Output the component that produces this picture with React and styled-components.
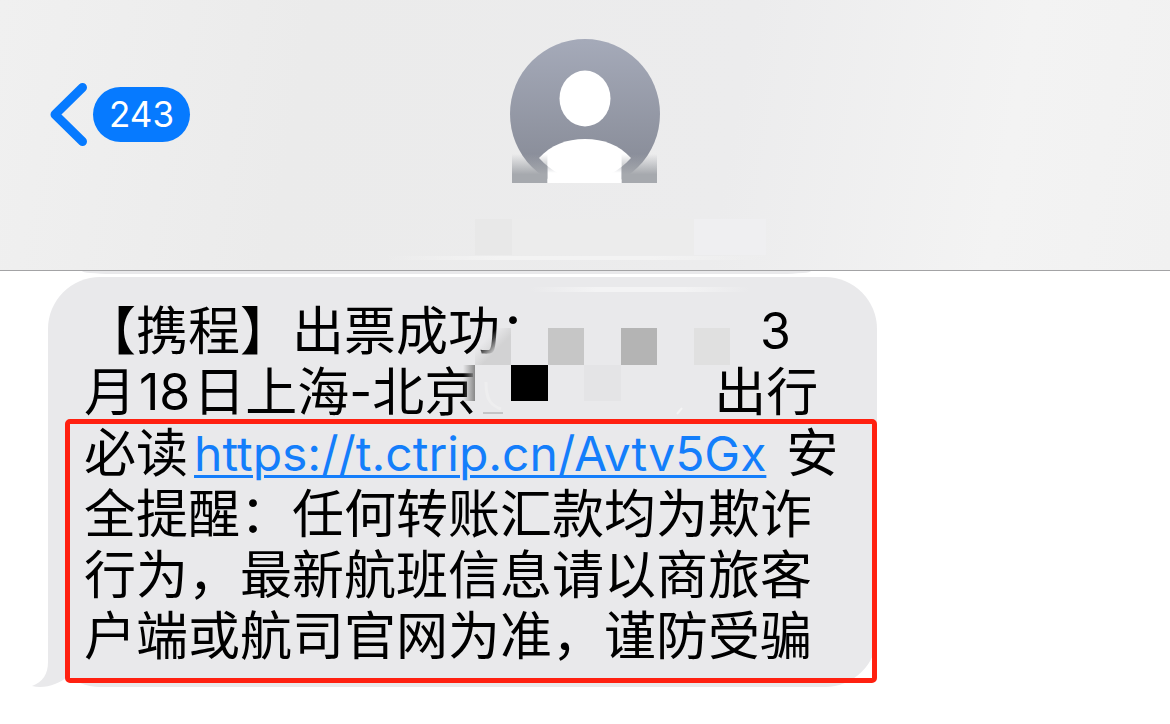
import styled, { createGlobalStyle } from 'styled-components';

const GlobalStyle = createGlobalStyle`
  * {
    box-sizing: border-box;
  }

  body {
    margin: 0;
    background: #fff;
    color: #000;
    font-family: Inter, 'Noto Sans CJK SC', sans-serif;
  }
`;

const Header = styled.header`
  display: grid;
  grid-template-columns: 1fr auto 1fr;
  align-items: start;
  height: 271px;
  padding: 39px 50px 0;
  border-bottom: 1px solid #a3a3a5;
  background: linear-gradient(100deg, #f0f0f0 0%, #ebebeb 26%, #ececed 62%, #f3f3f3 85%, #f1f1f1 100%);
`;

const BackButton = styled.button`
  display: flex;
  align-items: center;
  justify-self: start;
  gap: 5px;
  margin-top: 44px;
  padding: 0;
  border: 0;
  background: none;
  font-family: inherit;
  cursor: pointer;
`;

const Badge = styled.span`
  display: flex;
  align-items: center;
  height: 55px;
  padding: 0 16px;
  border-radius: 28px;
  background: #067aff;
  color: #fff;
  font-size: 35px;
  line-height: 55px;
`;

const Contact = styled.div`
  position: relative;
`;

const NameMosaic = styled.svg`
  position: absolute;
  top: 144px;
  left: 50%;
  width: 420px;
  transform: translateX(-50%);
`;

const Thread = styled.main`
  padding: 0 48px 36px;
`;

const PreviousBubble = styled.div`
  max-width: 829px;
  padding: 0 66px 0 34px;

  &::before {
    content: '';
    display: block;
    height: 3px;
    border-radius: 0 0 30px 30px / 0 0 3px 3px;
    background: #e9e9eb;
  }
`;

const Bubble = styled.article`
  position: relative;
  max-width: 829px;
  margin-top: 3px;
  padding: 24px 36px 20px;
  border-radius: 52px;
  background: #e9e9eb;
  font-size: 52px;
  line-height: 61px;
  white-space: nowrap;
`;

const Tail = styled.svg`
  position: absolute;
  left: -16px;
  bottom: 0;
`;

const Line = styled.div`
  display: flex;
  height: 61px;
`;

const Latin = styled.span`
  font-size: 50px;
`;

const Day = styled(Latin)`
  margin: 0 3px;
`;

const Link = styled.a`
  margin: 0 20px 0 6px;
  color: #147efb;
  font-size: 48px;
  text-decoration: underline;
  text-decoration-thickness: 3px;
  text-underline-offset: 4px;
`;

const Hidden = styled.span`
  flex: 0 0 ${({ $width }) => $width}px;
`;

const Mosaic = styled.svg`
  position: absolute;
  top: 0;
  left: 412px;
`;

const Marked = styled.div`
  position: relative;
`;

const Marker = styled.div`
  position: absolute;
  inset: -4px -36px -16px -19px;
  border: 5px solid #ff2010;
  border-radius: 5px;
  pointer-events: none;
`;

const ChevronLeft = () => (
  <svg width="38" height="63" viewBox="0 0 38 63" aria-hidden="true">
    <path d="M32.5 4.5 5 31.5 32.5 58.5" fill="none" stroke="#067aff" strokeWidth="9" strokeLinecap="round" strokeLinejoin="round" />
  </svg>
);

const Avatar = () => (
  <svg width="150" height="144" viewBox="0 0 150 144" role="img" aria-label="Contact" display="block">
    <defs>
      <linearGradient id="disc" x1="0" y1="0" x2="0" y2="1">
        <stop offset="0" stopColor="#a5aab9" />
        <stop offset=".8" stopColor="#8a8e9a" />
        <stop offset="1" stopColor="#868a95" />
      </linearGradient>
      <linearGradient id="smear" x1="0" y1="0" x2="0" y2="1">
        <stop offset="0" stopColor="#a6a9ae" stopOpacity="0" />
        <stop offset=".7" stopColor="#a6a9ae" />
      </linearGradient>
      <linearGradient id="whiteSmear" x1="0" y1="0" x2="0" y2="1">
        <stop offset="0" stopColor="#fff" stopOpacity="0" />
        <stop offset=".65" stopColor="#fff" />
      </linearGradient>
    </defs>
    <circle cx="75" cy="75" r="75" fill="url(#disc)" />
    <ellipse cx="75" cy="59.5" rx="25.5" ry="28" fill="#fff" />
    <path d="M29 119C41 106 56 100 75 100S109 106 121 119C109 132 94 141 75 141S41 132 29 119Z" fill="#fff" />
    <rect x="2" y="115" width="35.5" height="29" fill="url(#smear)" />
    <rect x="111.5" y="115" width="35.5" height="29" fill="url(#smear)" />
    <rect x="37.5" y="115" width="74" height="29" fill="url(#whiteSmear)" />
  </svg>
);

const App = () => {
  return (
    <>
      <GlobalStyle />
      <Header>
        <BackButton type="button">
          <ChevronLeft />
          <Badge>243</Badge>
        </BackButton>
        <Contact>
          <Avatar />
          <NameMosaic height="84" viewBox="0 0 420 84" aria-hidden="true">
            <defs>
              <linearGradient id="glow">
                <stop offset="0" stopColor="#f3f3f3" stopOpacity="0" />
                <stop offset=".3" stopColor="#f3f3f3" />
                <stop offset=".7" stopColor="#f3f3f3" />
                <stop offset="1" stopColor="#f3f3f3" stopOpacity="0" />
              </linearGradient>
            </defs>
            <rect x="100" y="36" width="37" height="36" fill="#e8e8e8" />
            <rect x="137" y="36" width="182" height="36" fill="#ececec" />
            <rect x="319" y="36" width="72" height="36" fill="#efeff1" />
            <rect x="10" y="73" width="380" height="4" fill="url(#glow)" />
          </NameMosaic>
        </Contact>
      </Header>
      <Thread>
        <PreviousBubble />
        <Bubble>
          <Tail width="36" height="50" viewBox="0 0 36 50" aria-hidden="true">
            <path d="M16 0V25C16 37 11 45 0 49C13 52 27 47 35 40V0Z" fill="#e9e9eb" />
          </Tail>
          <Line>
            【携程】出票成功：
            <Hidden $width={205} />
            <Day>3</Day>
          </Line>
          <Line>
            月<Day>18</Day>日上海<Latin>-</Latin>北京
            <Hidden $width={238} />
            出行
          </Line>
          <Mosaic width="290" height="142" viewBox="0 0 290 142" aria-hidden="true">
            <defs>
              <linearGradient id="top" x1="0" x2="1">
                <stop offset="0" stopColor="#f3f3f4" stopOpacity="0" />
                <stop offset=".3" stopColor="#f3f3f4" />
                <stop offset=".7" stopColor="#f3f3f4" />
                <stop offset="1" stopColor="#f3f3f4" stopOpacity="0" />
              </linearGradient>
              <linearGradient id="edge">
                <stop offset="0" stopColor="#888" stopOpacity="0" />
                <stop offset="1" stopColor="#888" />
              </linearGradient>
              <linearGradient id="corner" x1="0" y1="0" x2="1" y2="1">
                <stop offset=".3" stopColor="#d2d2d3" stopOpacity="0" />
                <stop offset=".6" stopColor="#d2d2d3" />
              </linearGradient>
            </defs>
            <rect x="70" y="10" width="220" height="5" fill="url(#top)" />
            <rect x="51" y="51" width="24" height="36" fill="#e9e9eb" />
            <rect x="15" y="51" width="36" height="37" fill="url(#corner)" />
            <rect x="3" y="88" width="12" height="36" fill="url(#edge)" />
            <rect x="88" y="51" width="36" height="37" fill="#c6c6c6" />
            <rect x="161" y="51" width="36" height="37" fill="#b4b4b4" />
            <rect x="234" y="51" width="36" height="37" fill="#e0e0e0" />
            <rect x="51" y="88" width="37" height="36" fill="#000" />
            <rect x="124" y="88" width="37" height="36" fill="#e4e4e6" />
            <path d="M26 105C26 122 30 128 41 132" fill="none" stroke="#eeeeef" strokeWidth="3" />
            <path d="M23 136h20" stroke="#c4c4c6" strokeWidth="2" />
            <path d="M217 137l5-6" stroke="#f4f4f4" strokeWidth="2" />
          </Mosaic>
          <Marked>
            <Line>
              必读<Link href="https://t.ctrip.cn/Avtv5Gx">https://t.ctrip.cn/Avtv5Gx</Link>安
            </Line>
            <Line>全提醒：任何转账汇款均为欺诈</Line>
            <Line>行为，最新航班信息请以商旅客</Line>
            <Line>户端或航司官网为准，谨防受骗</Line>
            <Marker />
          </Marked>
        </Bubble>
      </Thread>
    </>
  );
};

export default App;
